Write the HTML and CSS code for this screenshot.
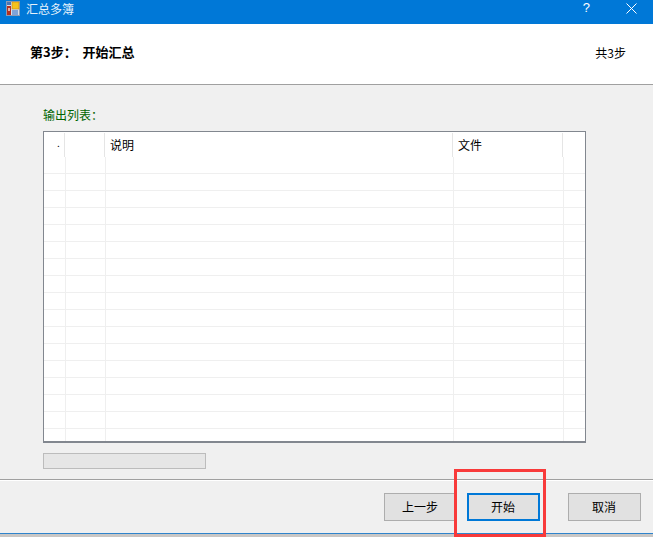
FILE: index.html
```html
<!DOCTYPE html>
<html lang="zh">
<head>
<meta charset="utf-8">
<title>汇总多簿</title>
<link rel="stylesheet" href="styles.css">
</head>
<body>
<div class="window">
  <header class="titlebar">
    <svg class="app-icon" width="14" height="15" viewBox="0 0 14 15">
      <rect x="0.5" y="0.5" width="13" height="14" fill="#d6dde8" stroke="#8a9bb5"/>
      <rect x="1" y="1" width="4" height="3" fill="#4a76b5"/>
      <rect x="1" y="5" width="4" height="9" fill="#b5301f"/>
      <rect x="2" y="7" width="2" height="3" fill="#e8b0a0"/>
      <rect x="6" y="1" width="7" height="7" fill="#f5c21c" stroke="#c98a10" stroke-width="0.6"/>
      <rect x="6" y="9" width="6" height="5" fill="#7fa3d8"/>
    </svg>
    <span class="title-text">汇总多簿</span>
    <span class="help">?</span>
    <svg class="close" width="11" height="11" viewBox="0 0 11 11">
      <path d="M0.5 0.5L10.5 10.5M10.5 0.5L0.5 10.5" stroke="#fff" stroke-width="1" fill="none"/>
    </svg>
  </header>

  <section class="banner">
    <span class="step-title">第3步： 开始汇总</span>
    <span class="step-count">共3步</span>
  </section>

  <main class="content">
    <div class="list-label">输出列表：</div>
    <div class="list">
      <div class="list-head">
        <div class="hcell hc-a">.</div>
        <div class="hcell hc-b"></div>
        <div class="hcell hc-c">说明</div>
        <div class="hcell hc-d">文件</div>
        <div class="hcell hc-e"></div>
      </div>
      <div class="list-body">
        <div class="row row-first"><i class="c-a"></i><i class="c-b"></i><i class="c-c"></i><i class="c-d"></i><i class="c-e"></i></div>
        <div class="row"><i class="c-a"></i><i class="c-b"></i><i class="c-c"></i><i class="c-d"></i><i class="c-e"></i></div>
        <div class="row"><i class="c-a"></i><i class="c-b"></i><i class="c-c"></i><i class="c-d"></i><i class="c-e"></i></div>
        <div class="row"><i class="c-a"></i><i class="c-b"></i><i class="c-c"></i><i class="c-d"></i><i class="c-e"></i></div>
        <div class="row"><i class="c-a"></i><i class="c-b"></i><i class="c-c"></i><i class="c-d"></i><i class="c-e"></i></div>
        <div class="row"><i class="c-a"></i><i class="c-b"></i><i class="c-c"></i><i class="c-d"></i><i class="c-e"></i></div>
        <div class="row"><i class="c-a"></i><i class="c-b"></i><i class="c-c"></i><i class="c-d"></i><i class="c-e"></i></div>
        <div class="row"><i class="c-a"></i><i class="c-b"></i><i class="c-c"></i><i class="c-d"></i><i class="c-e"></i></div>
        <div class="row"><i class="c-a"></i><i class="c-b"></i><i class="c-c"></i><i class="c-d"></i><i class="c-e"></i></div>
        <div class="row"><i class="c-a"></i><i class="c-b"></i><i class="c-c"></i><i class="c-d"></i><i class="c-e"></i></div>
        <div class="row"><i class="c-a"></i><i class="c-b"></i><i class="c-c"></i><i class="c-d"></i><i class="c-e"></i></div>
        <div class="row"><i class="c-a"></i><i class="c-b"></i><i class="c-c"></i><i class="c-d"></i><i class="c-e"></i></div>
        <div class="row"><i class="c-a"></i><i class="c-b"></i><i class="c-c"></i><i class="c-d"></i><i class="c-e"></i></div>
        <div class="row"><i class="c-a"></i><i class="c-b"></i><i class="c-c"></i><i class="c-d"></i><i class="c-e"></i></div>
        <div class="row"><i class="c-a"></i><i class="c-b"></i><i class="c-c"></i><i class="c-d"></i><i class="c-e"></i></div>
        <div class="row"><i class="c-a"></i><i class="c-b"></i><i class="c-c"></i><i class="c-d"></i><i class="c-e"></i></div>
        <div class="row row-last"><i class="c-a"></i><i class="c-b"></i><i class="c-c"></i><i class="c-d"></i><i class="c-e"></i></div>
      </div>
    </div>
    <div class="progress"></div>
  </main>

  <footer class="actions">
    <button class="btn btn-prev">上一步</button>
    <button class="btn btn-start">开始</button>
    <button class="btn btn-cancel">取消</button>
    <div class="highlight"></div>
  </footer>
  <div class="window-edge"></div>
</div>
</body>
</html>
```
FILE: styles.css
```css
* { box-sizing: border-box; }
html, body { margin: 0; padding: 0; }
body {
  width: 653px;
  height: 537px;
  overflow: hidden;
  background: #f0f0f0;
  font-family: "Noto Sans CJK SC", "Liberation Sans", sans-serif;
  font-size: 12px;
  color: #000;
}
.window { display: flex; flex-direction: column; height: 537px; }

.titlebar {
  height: 24px;
  background: #0078d7;
  color: #fff;
  display: flex;
  align-items: flex-start;
  padding: 1px 0 0 6px;
  flex: none;
}
.app-icon { flex: none; }
.title-text { margin-left: 6px; line-height: 15px; color: #e6f2fb; }
.help { margin-left: auto; font-family: "Liberation Sans", sans-serif; line-height: 14px; font-size: 13px; }
.close { margin: 2px 16px 0 36px; flex: none; }

.banner {
  height: 61px;
  flex: none;
  background: #fff;
  border-bottom: 1px solid #a0a0a0;
  display: flex;
  justify-content: space-between;
  align-items: flex-start;
  padding: 20px 27px 0 30px;
}
.step-title { font-weight: 700; font-size: 13px; line-height: 16px; word-spacing: 3px; }
.step-count { line-height: 18px; }

.content { flex: none; height: 394px; padding: 21px 67px 0 43px; }
.list-label { color: #006400; height: 25px; line-height: 17px; }
.list {
  height: 312px;
  border: 1px solid #82878f;
  border-width: 1px 1px 2px 1px;
  background: #fff;
  padding-top: 1px;
}
.list-head { display: flex; height: 25px; }
.hcell { height: 24px; border-right: 1px solid #e5e5e5; padding-left: 5px; line-height: 24px; flex: none; }
.hc-a { width: 21px; padding-left: 13px; line-height: 20px; font-size: 10px; }
.hc-b { width: 40px; }
.hc-c { width: 348px; }
.hc-d { width: 110px; }
.hc-e { width: 22px; border-right: 0; }

.list-body { height: 284px; overflow: hidden; margin-top: -1px; }
.row { display: flex; height: 17px; border-bottom: 1px solid #efefef; }
.row-last { border-bottom: 0; height: 12px; }
.row i { display: block; height: 100%; border-right: 1px solid #efefef; flex: none; }
.c-a { width: 22px; }
.c-b { width: 40px; }
.c-c { width: 348px; }
.c-d { width: 110px; }
.c-e { width: 21px; border-right: 0 !important; }

.progress {
  width: 163px;
  height: 16px;
  margin-top: 10px;
  background: #e6e6e6;
  border: 1px solid #bcbcbc;
}

.actions {
  position: relative;
  flex: none;
  height: 54px;
  border-top: 1px solid #a0a0a0;
  box-shadow: inset 0 1px 0 #fff;
  display: flex;
  padding: 13px 12px 0 384px;
}
.btn {
  width: 73px;
  height: 28px;
  padding: 0 1px 2px 0;
  font: inherit;
  color: #000;
  background: #e1e1e1;
  border: 1px solid #adadad;
}
.btn-start { margin-left: 10px; border: 2px solid #0078d7; }
.btn-cancel { margin-left: 28px; }
.highlight {
  position: absolute;
  left: 454px;
  top: -11px;
  width: 92px;
  height: 68px;
  border: 3px solid #f83a3a;
  pointer-events: none;
}
.window-edge { height: 4px; flex: none; background: #c9c7c5; border-top: 1px solid #2f84cc; }
```
